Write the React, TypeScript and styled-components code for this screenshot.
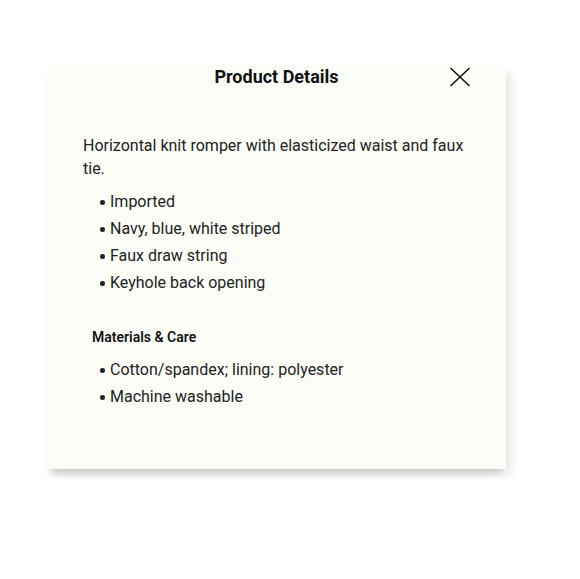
import React from 'react';
import styled, { createGlobalStyle } from 'styled-components';

const GlobalStyle = createGlobalStyle`
  body {
    margin: 0;
    background: #ffffff;
    font-family: Roboto, "Liberation Sans", sans-serif;
  }
`;

const Page = styled.div`
  width: 580px;
  height: 579px;
  padding: 66px 0 0 47px;
  box-sizing: border-box;
`;

const Card = styled.section`
  width: 459px;
  height: 403px;
  box-sizing: border-box;
  padding: 0 36px;
  background: #fdfdf8;
  box-shadow: 0 9px 8px -4px rgba(0, 0, 0, 0.1), 6px 6px 8px rgba(0, 0, 0, 0.08),
    -3px 8px 6px -4px rgba(0, 0, 0, 0.05);
`;

const Header = styled.header`
  position: relative;
  height: 22px;
  display: flex;
  justify-content: center;
  align-items: center;
`;

const Title = styled.h2`
  margin: 0;
  font-size: 18px;
  line-height: 22px;
  font-weight: 700;
  color: #111;
`;

const CloseButton = styled.button`
  position: absolute;
  right: -1px;
  top: 1px;
  width: 22px;
  height: 20px;
  padding: 0;
  border: none;
  background: none;
  cursor: pointer;
  display: flex;
  align-items: center;
  justify-content: center;
`;

const Description = styled.p`
  margin: 46px 0 0;
  font-size: 16px;
  line-height: 23px;
  color: #222;
`;

const List = styled.ul<{ $top: number }>`
  list-style: none;
  margin: ${p => p.$top}px 0 0;
  padding: 0 0 0 27px;
`;

const Item = styled.li`
  position: relative;
  font-size: 16px;
  line-height: 27px;
  color: #222;

  &::before {
    content: '';
    position: absolute;
    left: -10px;
    top: 12px;
    width: 4.5px;
    height: 4.5px;
    border-radius: 50%;
    background: #222;
  }
`;

const SectionTitle = styled.h3`
  margin: 31px 0 0 9px;
  font-size: 14px;
  line-height: 20px;
  font-weight: 600;
  color: #111;
`;

const CloseIcon = () => (
  <svg width="22" height="20" viewBox="0 0 22 20" fill="none">
    <path d="M1.5 1 L20.5 19 M20.5 1 L1.5 19" stroke="#111" strokeWidth="1.6" />
  </svg>
);

const features = ['Imported', 'Navy, blue, white striped', 'Faux draw string', 'Keyhole back opening'];
const care = ['Cotton/spandex; lining: polyester', 'Machine washable'];

export default function App() {
  return (
    <>
      <GlobalStyle />
      <Page>
        <Card>
          <Header>
            <Title>Product Details</Title>
            <CloseButton aria-label="Close">
              <CloseIcon />
            </CloseButton>
          </Header>
          <Description>Horizontal knit romper with elasticized waist and faux tie.</Description>
          <List $top={8}>
            {features.map(f => (
              <Item key={f}>{f}</Item>
            ))}
          </List>
          <SectionTitle>Materials &amp; Care</SectionTitle>
          <List $top={9}>
            {care.map(c => (
              <Item key={c}>{c}</Item>
            ))}
          </List>
        </Card>
      </Page>
    </>
  );
}
